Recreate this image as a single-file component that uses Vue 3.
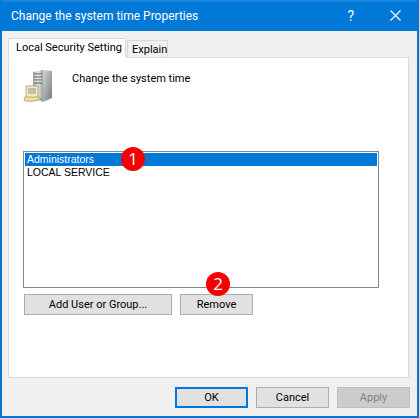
<template>
    <div class="dialog">
        <div class="titlebar">
            <span class="title">Change the system time Properties</span>
            <span class="help">?</span>
            <svg class="close" width="11" height="11" viewBox="0 0 11 11" aria-hidden="true">
                <path d="M0.5 0.5 L10.5 10.5 M10.5 0.5 L0.5 10.5" stroke="#fff" stroke-width="1.1" fill="none" />
            </svg>
        </div>

        <div class="content">
            <div class="tabs">
                <div class="tab active">Local Security Setting</div>
                <div class="tab">Explain</div>
            </div>

            <div class="panel">
                <div class="policy">
                    <svg class="policy-icon" width="32" height="34" viewBox="0 0 32 34" aria-hidden="true">
                        <defs>
                            <linearGradient id="front" x1="0" y1="0" x2="1" y2="0">
                                <stop offset="0" stop-color="#9a9fa3" />
                                <stop offset="0.5" stop-color="#e4e7e8" />
                                <stop offset="1" stop-color="#9a9fa2" />
                            </linearGradient>
                            <linearGradient id="side" x1="0" y1="0" x2="1" y2="1">
                                <stop offset="0" stop-color="#d2d5d5" />
                                <stop offset="1" stop-color="#757b7d" />
                            </linearGradient>
                        </defs>
                        <path d="M11 3 L21 1 L21 33 L11 30 Z" fill="url(#front)" />
                        <path d="M21 1 L30 2 L30 29 L21 33 Z" fill="url(#side)" />
                        <path d="M12 5 H20 M12 8 H20 M12 11 H20 M12 14 H20" stroke="#565c60" stroke-width="1.2" />
                        <path d="M12 6.2 H20 M12 9.2 H20 M12 12.2 H20" stroke="#f2f4f4" stroke-width="0.7" />
                        <rect x="18" y="29" width="2" height="2" fill="#5fc24a" />
                        <path d="M4 17 H16 V29 H4 Z" fill="#f5ebc0" stroke="#a89a66" stroke-width="0.8" />
                        <path d="M6 20 H14 M6 22 H14 M6 24 H14" stroke="#8d93a8" stroke-width="1" />
                        <path d="M3 28 H17 V31 Q10 33 3 32 Q1 30 3 28 Z" fill="#ece0a6" stroke="#a89a66" stroke-width="0.8" />
                    </svg>
                    <span class="policy-name">Change the system time</span>
                </div>

                <div class="listbox">
                    <div class="item selected">Administrators</div>
                    <div class="item">LOCAL SERVICE</div>
                    <span class="badge badge-one">1</span>
                </div>

                <div class="list-actions">
                    <button type="button" class="btn btn-add">Add User or Group...</button>
                    <button type="button" class="btn">Remove</button>
                    <span class="badge badge-two">2</span>
                </div>
            </div>

            <div class="footer">
                <button type="button" class="btn default">OK</button>
                <button type="button" class="btn">Cancel</button>
                <button type="button" class="btn disabled">Apply</button>
            </div>
        </div>
    </div>
</template>

<script setup>
</script>

<style>
html,
body {
    margin: 0;
    height: 100%;
    overflow: hidden;
}
</style>

<style scoped>
.dialog {
    width: 419px;
    height: 418px;
    box-sizing: border-box;
    border: 2px solid #0078d7;
    border-top: 0;
    background: #f0f0f0;
    display: flex;
    flex-direction: column;
    font-family: Roboto, "Liberation Sans", sans-serif;
    font-size: 11px;
    color: #000;
}

.titlebar {
    height: 31px;
    flex: none;
    box-sizing: border-box;
    border-top: 2px solid #1a86db;
    background: #0078d7;
    color: #fff;
    display: flex;
    align-items: center;
    padding: 0 16px 2px 9px;
}

.title {
    flex: 1;
    font-size: 12px;
}

.help {
    font-size: 14px;
    margin-right: 36px;
}

.close {
    flex: none;
    margin-bottom: 1px;
}

.content {
    flex: 1;
    display: flex;
    flex-direction: column;
    padding: 7px 8px 8px 6px;
    min-height: 0;
}

.tabs {
    display: flex;
    align-items: flex-end;
    height: 20px;
    flex: none;
    position: relative;
    z-index: 1;
    margin-bottom: -1px;
}

.tab {
    box-sizing: border-box;
    width: 41px;
    height: 18px;
    line-height: 18px;
    padding: 0 0 0 4px;
    border: 1px solid #d9d9d9;
    background: #f0f0f0;
    margin-left: 1px;
    white-space: nowrap;
}

.tab.active {
    height: 20px;
    line-height: 17px;
    width: 118px;
    padding: 0 0 0 7px;
    margin-left: 0;
    background: #fff;
    border-bottom-color: #fff;
}

.panel {
    flex: 1;
    min-height: 0;
    box-sizing: border-box;
    border: 1px solid #d9d9d9;
    background: #fff;
    display: flex;
    flex-direction: column;
    padding: 11px 29px 0 14px;
}

.policy {
    display: flex;
    align-items: flex-start;
    height: 82px;
    flex: none;
}

.policy-icon {
    flex: none;
    margin: 0 18px 0 -1px;
}

.policy-name {
    margin-top: 3px;
}

.listbox {
    position: relative;
    height: 137px;
    flex: none;
    box-sizing: border-box;
    border: 1px solid #828790;
    padding: 1px;
    font-family: "Liberation Sans", Arial, sans-serif;
    font-size: 10.5px;
}

.item {
    height: 13px;
    line-height: 13px;
    padding-left: 2px;
}

.item.selected {
    background: #0078d7;
    color: #fff;
}

.list-actions {
    position: relative;
    display: flex;
    gap: 8px;
    margin-top: 6px;
    padding-left: 1px;
}

.btn {
    box-sizing: border-box;
    width: 73px;
    height: 21px;
    padding: 0;
    border: 1px solid #adadad;
    border-radius: 0;
    background: #e1e1e1;
    color: #000;
    font: inherit;
}

.btn-add {
    width: 148px;
}

.btn.default {
    border: 2px solid #0078d7;
}

.btn.disabled {
    background: #cccccc;
    border-color: #bfbfbf;
    color: #838383;
}

.footer {
    display: flex;
    justify-content: flex-end;
    gap: 8px;
    margin-top: 9px;
    margin-right: -1px;
    flex: none;
}

.badge {
    position: absolute;
    width: 24px;
    height: 24px;
    border-radius: 50%;
    background: #f40000;
    color: #fff;
    font-family: "Open Sans", sans-serif;
    font-size: 17px;
    line-height: 23px;
    text-align: center;
}

.badge-one {
    left: 97px;
    top: -5px;
}

.badge-two {
    left: 183px;
    top: -22px;
}
</style>
